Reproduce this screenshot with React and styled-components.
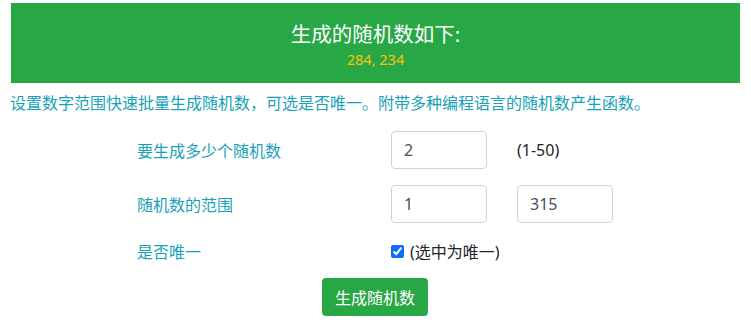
import React, { useState } from 'react';
import styled, { createGlobalStyle } from 'styled-components';

const GlobalStyle = createGlobalStyle`
  body {
    margin: 0;
    background: #fff;
    font-family: "Noto Sans", "Noto Sans CJK SC", sans-serif;
    color: #212529;
  }
`;

const Page = styled.div`
  padding: 3px 11px 0 10px;
`;

const Banner = styled.div`
  background-color: #28a745;
  padding: 16px 0 14px;
  margin-left: 1px;
  text-align: center;
`;

const BannerTitle = styled.div`
  color: #fff;
  font-size: 20.5px;
  line-height: 30px;
`;

const BannerNumbers = styled.div`
  color: #ffc107;
  font-size: 14.5px;
  line-height: 20px;
`;

const Intro = styled.p`
  color: #17a2b8;
  font-size: 16px;
  line-height: 24px;
  margin: 8px 0 16px;
`;

const Form = styled.div`
  display: grid;
  grid-template-columns: 254px 126px auto;
  row-gap: 16px;
  margin-left: 127px;
  align-items: center;
`;

const Label = styled.div`
  color: #17a2b8;
  font-size: 16px;
`;

const Input = styled.input`
  box-sizing: border-box;
  width: 96px;
  height: 38px;
  padding: 6px 12px;
  border: 1px solid #ced4da;
  border-radius: 4px;
  font-family: inherit;
  font-size: 16px;
  color: #495057;
  outline: none;
`;

const Hint = styled.span`
  font-size: 16px;
  color: #212529;
`;

const CheckLabel = styled.label`
  grid-column: span 2;
  display: flex;
  align-items: center;
  gap: 6px;
  font-size: 16px;
  height: 24px;

  input {
    margin: 0;
    width: 13px;
    height: 13px;
    accent-color: #0d6efd;
  }
`;

const Actions = styled.div`
  display: flex;
  justify-content: center;
  margin-top: 15px;
`;

const Button = styled.button`
  background-color: #28a745;
  color: #fff;
  border: none;
  border-radius: 4px;
  height: 38px;
  padding: 0 13px;
  font-family: inherit;
  font-size: 16px;
  cursor: pointer;
`;

export default function App() {
  const [count, setCount] = useState('2');
  const [min, setMin] = useState('1');
  const [max, setMax] = useState('315');
  const [unique, setUnique] = useState(true);

  return (
    <Page>
      <GlobalStyle />
      <Banner>
        <BannerTitle>生成的随机数如下:</BannerTitle>
        <BannerNumbers>284, 234</BannerNumbers>
      </Banner>
      <Intro>设置数字范围快速批量生成随机数，可选是否唯一。附带多种编程语言的随机数产生函数。</Intro>
      <Form>
        <Label>要生成多少个随机数</Label>
        <Input value={count} onChange={(e) => setCount(e.target.value)} />
        <Hint>(1-50)</Hint>

        <Label>随机数的范围</Label>
        <Input value={min} onChange={(e) => setMin(e.target.value)} />
        <Input value={max} onChange={(e) => setMax(e.target.value)} />

        <Label>是否唯一</Label>
        <CheckLabel>
          <input type="checkbox" checked={unique} onChange={(e) => setUnique(e.target.checked)} />
          (选中为唯一)
        </CheckLabel>
      </Form>
      <Actions>
        <Button>生成随机数</Button>
      </Actions>
    </Page>
  );
}
